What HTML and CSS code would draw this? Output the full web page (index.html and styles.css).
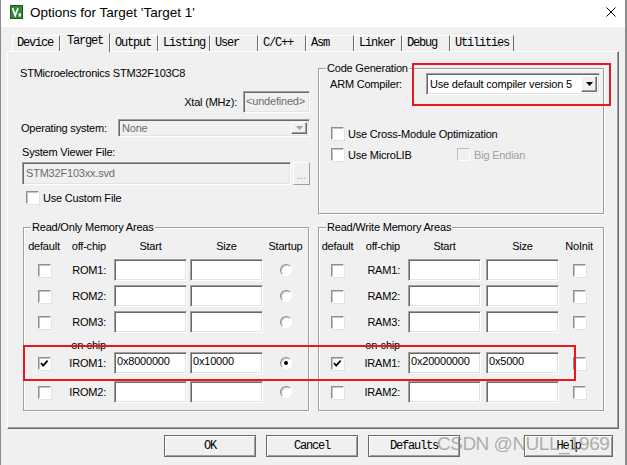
FILE: index.html
```html
<!DOCTYPE html>
<html lang="en">
<head>
  <meta charset="UTF-8">
  <title>Options for Target 'Target 1'</title>
  <link rel="stylesheet" href="styles.css">
</head>
<body>
  <div class="window">
    <div class="titlebar">
      <svg class="app-icon" width="13" height="14" viewBox="0 0 13 14">
        <rect x="0.5" y="0.5" width="12" height="13" fill="#2f8a3c" stroke="#1c5a24"/>
        <polyline points="2.5,3 5.2,10.5 8,3" fill="none" stroke="#fff" stroke-width="1.7"/>
        <rect x="8.6" y="8.2" width="2.4" height="3.4" fill="#d8f0d0"/>
      </svg>
      <span class="title">Options for Target 'Target 1'</span>
      <svg class="close" width="10" height="10" viewBox="0 0 10 10">
        <path d="M0.5 0.5 L9.5 9.5 M9.5 0.5 L0.5 9.5" stroke="#000" stroke-width="1"/>
      </svg>
    </div>

    <div class="tabs">
      <div class="tab">Device</div>
      <div class="tab active">Target</div>
      <div class="tab">Output</div>
      <div class="tab">Listing</div>
      <div class="tab">User</div>
      <div class="tab">C/C++</div>
      <div class="tab">Asm</div>
      <div class="tab">Linker</div>
      <div class="tab">Debug</div>
      <div class="tab">Utilities</div>
    </div>

    <div class="panel">
      <div class="row-top">
        <div class="device-col">
          <div class="device-name">STMicroelectronics STM32F103C8</div>
          <div class="xtal-row">
            <span>Xtal (MHz):</span>
            <div class="field disabled xtal">&lt;undefined&gt;</div>
          </div>
          <div class="os-row">
            <span class="os-label">Operating system:</span>
            <div class="combo disabled os">
              <span class="combo-text">None</span>
              <span class="combo-btn"><svg width="7" height="4" viewBox="0 0 7 4"><polygon points="0,0 7,0 3.5,4" fill="#a0a0a0"/></svg></span>
            </div>
          </div>
          <div class="svf-label">System Viewer File:</div>
          <div class="svf-row">
            <div class="field disabled svf">STM32F103xx.svd</div>
            <div class="dots-btn">...</div>
          </div>
          <div class="check-row custom-file">
            <span class="checkbox"></span>
            <span>Use Custom File</span>
          </div>
        </div>

        <div class="group codegen">
          <div class="group-title">Code Generation</div>
          <div class="arm-row">
            <span class="arm-label">ARM Compiler:</span>
            <div class="combo arm">
              <span class="combo-text">Use default compiler version 5</span>
              <span class="combo-btn"><svg width="7" height="4" viewBox="0 0 7 4"><polygon points="0,0 7,0 3.5,4" fill="#000"/></svg></span>
            </div>
          </div>
          <div class="check-row opt-cross">
            <span class="checkbox"></span>
            <span>Use Cross-Module Optimization</span>
          </div>
          <div class="check-row opt-lib">
            <div class="lib">
              <span class="checkbox"></span>
              <span>Use MicroLIB</span>
            </div>
            <span class="checkbox disabled"></span>
            <span class="muted">Big Endian</span>
          </div>
          <div class="red-box arm-mark"></div>
        </div>
      </div>

      <div class="row-mem">
        <div class="group mem mem-ro">
          <div class="group-title">Read/Only Memory Areas</div>
          <div class="mem-grid">
            <div class="cell">default</div>
            <div class="cell lbl">off-chip</div>
            <div class="cell in"><span class="hdr">Start</span></div>
            <div class="cell in"><span class="hdr">Size</span></div>
            <div class="cell">Startup</div>

            <div class="cell"><span class="checkbox"></span></div>
            <div class="cell lbl">ROM1:</div>
            <div class="cell in"><div class="field mem-field"></div></div>
            <div class="cell in"><div class="field mem-field"></div></div>
            <div class="cell"><span class="radio"></span></div>

            <div class="cell"><span class="checkbox"></span></div>
            <div class="cell lbl">ROM2:</div>
            <div class="cell in"><div class="field mem-field"></div></div>
            <div class="cell in"><div class="field mem-field"></div></div>
            <div class="cell"><span class="radio"></span></div>

            <div class="cell"><span class="checkbox"></span></div>
            <div class="cell lbl">ROM3:</div>
            <div class="cell in"><div class="field mem-field"></div></div>
            <div class="cell in"><div class="field mem-field"></div></div>
            <div class="cell"><span class="radio"></span></div>

            <div class="cell onchip"></div>
            <div class="cell lbl onchip">on-chip</div>
            <div class="cell onchip"></div>
            <div class="cell onchip"></div>
            <div class="cell onchip"></div>

            <div class="cell"><span class="checkbox"><svg width="11" height="11" viewBox="0 0 11 11"><polyline points="2,5 4.2,7.6 8.6,2.6" fill="none" stroke="#000" stroke-width="1.7"/></svg></span></div>
            <div class="cell lbl">IROM1:</div>
            <div class="cell in"><div class="field mem-field">0x8000000</div></div>
            <div class="cell in"><div class="field mem-field">0x10000</div></div>
            <div class="cell"><span class="radio on"></span></div>

            <div class="cell"><span class="checkbox"></span></div>
            <div class="cell lbl">IROM2:</div>
            <div class="cell in"><div class="field mem-field"></div></div>
            <div class="cell in"><div class="field mem-field"></div></div>
            <div class="cell"><span class="radio"></span></div>
          </div>
        </div>

        <div class="group mem mem-rw">
          <div class="group-title">Read/Write Memory Areas</div>
          <div class="mem-grid">
            <div class="cell">default</div>
            <div class="cell lbl">off-chip</div>
            <div class="cell in"><span class="hdr">Start</span></div>
            <div class="cell in"><span class="hdr">Size</span></div>
            <div class="cell last">NoInit</div>

            <div class="cell"><span class="checkbox"></span></div>
            <div class="cell lbl">RAM1:</div>
            <div class="cell in"><div class="field mem-field"></div></div>
            <div class="cell in"><div class="field mem-field"></div></div>
            <div class="cell last"><span class="checkbox"></span></div>

            <div class="cell"><span class="checkbox"></span></div>
            <div class="cell lbl">RAM2:</div>
            <div class="cell in"><div class="field mem-field"></div></div>
            <div class="cell in"><div class="field mem-field"></div></div>
            <div class="cell last"><span class="checkbox"></span></div>

            <div class="cell"><span class="checkbox"></span></div>
            <div class="cell lbl">RAM3:</div>
            <div class="cell in"><div class="field mem-field"></div></div>
            <div class="cell in"><div class="field mem-field"></div></div>
            <div class="cell last"><span class="checkbox"></span></div>

            <div class="cell onchip"></div>
            <div class="cell lbl onchip">on-chip</div>
            <div class="cell onchip"></div>
            <div class="cell onchip"></div>
            <div class="cell onchip"></div>

            <div class="cell"><span class="checkbox"><svg width="11" height="11" viewBox="0 0 11 11"><polyline points="2,5 4.2,7.6 8.6,2.6" fill="none" stroke="#000" stroke-width="1.7"/></svg></span></div>
            <div class="cell lbl">IRAM1:</div>
            <div class="cell in"><div class="field mem-field">0x20000000</div></div>
            <div class="cell in"><div class="field mem-field">0x5000</div></div>
            <div class="cell last"><span class="checkbox"></span></div>

            <div class="cell"><span class="checkbox"></span></div>
            <div class="cell lbl">IRAM2:</div>
            <div class="cell in"><div class="field mem-field"></div></div>
            <div class="cell in"><div class="field mem-field"></div></div>
            <div class="cell last"><span class="checkbox"></span></div>
          </div>
        </div>

        <div class="red-box mem-mark"></div>
      </div>
    </div>

    <div class="buttons">
      <div class="btn">OK</div>
      <div class="btn">Cancel</div>
      <div class="btn">Defaults</div>
      <div class="btn help">Help</div>
    </div>

    <div class="watermark">CSDN @NULL_1969</div>
  </div>
</body>
</html>
```

FILE: styles.css
```css
body {
  margin: 0;
  background: #fff;
  font-family: "Liberation Sans", Arial, sans-serif;
  font-size: 11px;
  letter-spacing: -0.2px;
  color: #000;
}

.window {
  position: relative;
  width: 627px;
  height: 465px;
  box-sizing: border-box;
  border-left: 1px solid #8c8c8c;
  border-right: 2px solid #8c8c8c;
  background: #f0f0f0;
  overflow: hidden;
}

/* title bar */
.titlebar {
  height: 27px;
  box-sizing: border-box;
  padding: 0 0 3px 9px;
  display: flex;
  align-items: center;
  background: #fff;
}

.title {
  margin-left: 7px;
  font-size: 13.5px;
  letter-spacing: 0;
}

.close {
  margin-left: auto;
  margin-right: 9px;
}

/* tabs */
.tabs {
  display: flex;
  align-items: flex-end;
  height: 18px;
  padding: 6px 0 0 11px;
  font-family: "Liberation Mono", "Courier New", monospace;
  font-size: 12px;
  letter-spacing: -1.2px;
}

.tab {
  min-width: 48px;
  height: 16px;
  box-sizing: border-box;
  padding: 0 4px;
  border: 1px solid;
  border-color: #fff #696969 transparent #fff;
  border-bottom: none;
  line-height: 15px;
  white-space: nowrap;
}

.tab.active {
  position: relative;
  z-index: 1;
  height: 19px;
  margin-bottom: -1px;
  padding: 0 6px;
  background: #f0f0f0;
  line-height: 14px;
}

/* tab page */
.panel {
  margin-left: 6px;
  width: 612px;
  height: 378px;
  box-sizing: border-box;
  padding: 10px 0 0 12px;
  border: 1px solid;
  border-color: #fff #696969 #696969 #fff;
  box-shadow: inset -1px -1px 0 #a0a0a0;
}

.row-top {
  display: flex;
  align-items: flex-start;
}

.device-col {
  width: 290px;
}

.device-name {
  margin-top: 5px;
  line-height: 13px;
}

.xtal-row {
  display: flex;
  justify-content: flex-end;
  align-items: center;
  margin-top: 11px;
}

.os-row {
  display: flex;
  align-items: center;
  margin-top: 6px;
}

.os-label {
  padding-left: 1px;
}

.svf-label {
  margin-top: 9px;
  padding-left: 2px;
  line-height: 13px;
}

.svf-row {
  display: flex;
  margin-top: 3px;
}

.custom-file {
  margin-top: 6px;
  padding-left: 6px;
}

/* sunken controls */
.field {
  box-sizing: border-box;
  height: 22px;
  padding: 0 3px;
  border: 1px solid;
  border-color: #a0a0a0 #fff #fff #a0a0a0;
  box-shadow: inset 1px 1px 0 #696969, inset -1px -1px 0 #e3e3e3;
  background: #fff;
  line-height: 18px;
  white-space: nowrap;
  overflow: hidden;
}

.field.disabled {
  background: #f0f0f0;
  color: #6d6d6d;
}

.xtal {
  width: 67px;
  margin-left: 6px;
  padding: 0 2px;
  line-height: 19px;
}

.svf {
  width: 269px;
  height: 23px;
  margin-left: 2px;
  line-height: 20px;
}

.dots-btn {
  width: 17px;
  height: 23px;
  box-sizing: border-box;
  margin-left: 2px;
  border: 1px solid;
  border-color: #fff #a0a0a0 #a0a0a0 #fff;
  color: #a0a0a0;
  text-align: center;
  line-height: 24px;
}

.combo {
  display: flex;
  align-items: stretch;
  box-sizing: border-box;
  padding: 2px;
  border: 1px solid;
  border-color: #a0a0a0 #fff #fff #a0a0a0;
  box-shadow: inset 1px 1px 0 #696969, inset -1px -1px 0 #e3e3e3;
  background: #fff;
}

.combo.disabled {
  background: #f0f0f0;
  color: #6d6d6d;
}

.combo-text {
  padding-left: 1px;
  white-space: nowrap;
  line-height: 16px;
}

.combo-btn {
  display: flex;
  align-items: center;
  justify-content: center;
  width: 16px;
  margin-left: auto;
  box-sizing: border-box;
  border: 1px solid;
  border-color: #fff #696969 #696969 #fff;
  box-shadow: inset -1px -1px 0 #a0a0a0;
  background: #f0f0f0;
}

.os {
  width: 192px;
  height: 18px;
  margin-left: auto;
}

.os .combo-text {
  line-height: 13px;
}

.arm {
  width: 174px;
  height: 22px;
}

/* group boxes */
.group {
  box-sizing: border-box;
  border: 1px solid #a0a0a0;
  box-shadow: inset 1px 1px 0 #fff, 1px 1px 0 #fff;
}

.group-title {
  width: fit-content;
  margin: -7px 0 0 7px;
  padding: 0 1px;
  line-height: 13px;
  background: #f0f0f0;
}

.codegen {
  position: relative;
  width: 286px;
  height: 146px;
  margin: 6px 0 0 8px;
}

.arm-row {
  display: flex;
  align-items: center;
  margin-top: -2px;
  padding-left: 11px;
}

.arm-label {
  width: 96px;
}

.check-row {
  display: flex;
  align-items: center;
  height: 13px;
}

.codegen .check-row {
  padding-left: 12px;
}

.opt-cross {
  margin-top: 32px;
}

.opt-lib {
  margin-top: 8px;
}

.lib {
  display: flex;
  align-items: center;
  width: 126px;
}

.muted {
  color: #a0a0a0;
}

.checkbox {
  flex: none;
  display: flex;
  align-items: center;
  justify-content: center;
  width: 13px;
  height: 13px;
  box-sizing: border-box;
  margin-right: 4px;
  border: 1px solid;
  border-color: #8e8e8e #fff #fff #8e8e8e;
  box-shadow: inset 1px 1px 0 #c4c4c4, 1px 1px 0 #e3e3e3;
  background: #fff;
}

.checkbox.disabled {
  background: #f0f0f0;
  border-color: #bdbdbd #fff #fff #bdbdbd;
  box-shadow: none;
}

.cell .checkbox {
  margin-right: 0;
}

.radio {
  display: flex;
  align-items: center;
  justify-content: center;
  width: 12px;
  height: 12px;
  box-sizing: border-box;
  border-radius: 50%;
  border: 1px solid;
  border-color: #8e8e8e #fff #fff #8e8e8e;
  box-shadow: inset 1px 1px 0 #c4c4c4;
  background: #fff;
}

.radio.on::after {
  content: "";
  width: 4px;
  height: 4px;
  border-radius: 50%;
  background: #000;
}

/* memory areas */
.row-mem {
  position: relative;
  display: flex;
  margin: 13px 0 0 3px;
}

.mem {
  width: 286px;
  height: 184px;
}

.mem-rw {
  margin-left: 9px;
}

.mem-grid {
  display: grid;
  grid-template-rows: 24px 26px 26px 26px 15px 29px 22px;
  align-items: start;
  margin-top: 1px;
}

.mem-ro .mem-grid {
  grid-template-columns: 40px 46px 77px 76px 1fr;
}

.mem-rw .mem-grid {
  grid-template-columns: 37px 48px 77px 78px 1fr;
}

.cell {
  display: flex;
  align-items: center;
  justify-content: center;
  height: 22px;
  white-space: nowrap;
}

.cell.onchip {
  height: 15px;
}

.cell.lbl {
  justify-content: flex-end;
  padding-right: 4px;
}

.cell.in {
  justify-content: flex-end;
}

.cell.last {
  padding-right: 4px;
}

.hdr {
  width: 73px;
  text-align: center;
}

.mem-field {
  width: 73px;
  padding: 0 2px;
  line-height: 17px;
}

/* highlight marks over the dialog */
.red-box {
  position: absolute;
  box-sizing: border-box;
  border: 2px solid #e8161e;
}

.arm-mark {
  left: 93px;
  top: -6px;
  width: 199px;
  height: 43px;
}

.mem-mark {
  left: 0;
  top: 118px;
  width: 553px;
  height: 36px;
}

/* dialog buttons */
.buttons {
  display: flex;
  gap: 10px;
  padding: 6px 0 0 163px;
}

.btn {
  width: 92px;
  height: 22px;
  box-sizing: border-box;
  border: 1px solid #6a6a6a;
  box-shadow: inset 1px 1px 0 #fff, inset -1px -1px 0 #a0a0a0;
  font-family: "Liberation Mono", "Courier New", monospace;
  font-size: 12px;
  letter-spacing: -1.2px;
  text-align: center;
  line-height: 20px;
}

.btn.help {
  width: 89px;
  margin-left: 54px;
}

.watermark {
  position: absolute;
  left: 436px;
  top: 431px;
  font-size: 19px;
  line-height: 26px;
  letter-spacing: -0.5px;
  color: rgba(150, 150, 150, 0.75);
}
```
